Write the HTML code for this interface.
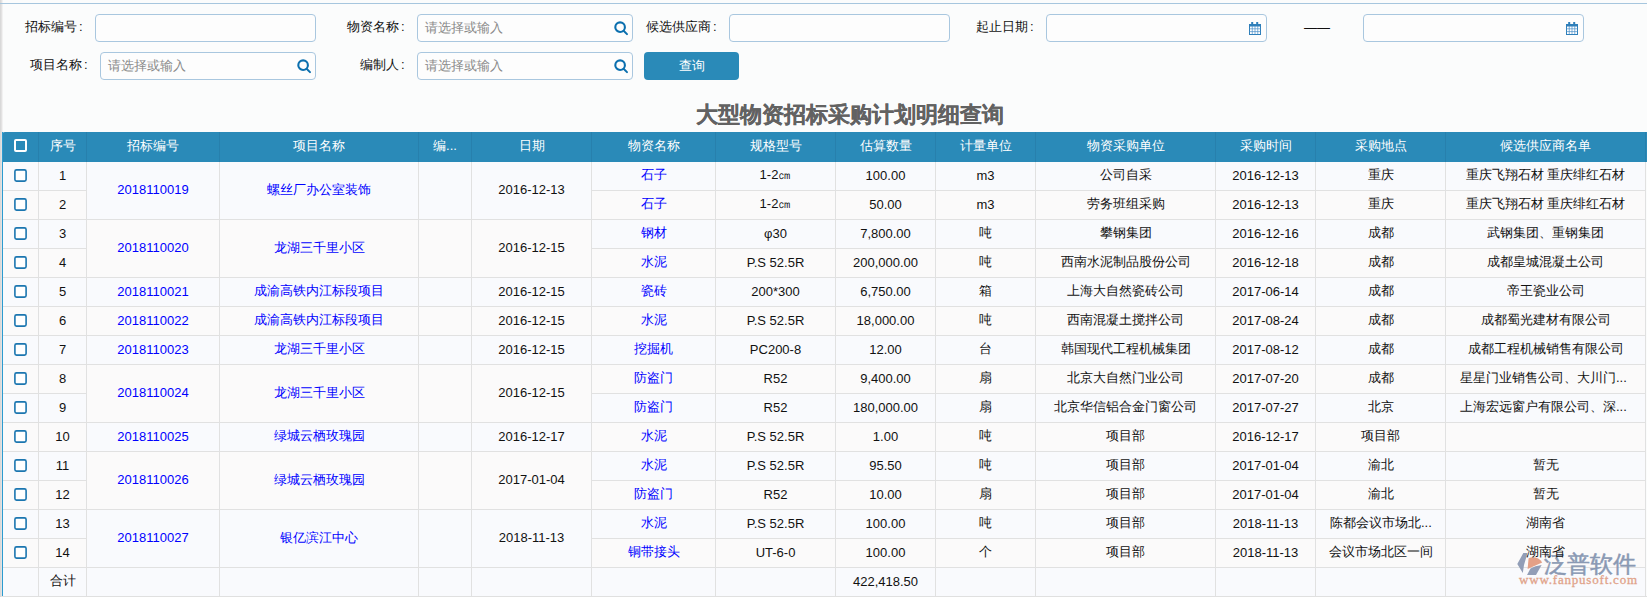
<!DOCTYPE html>
<html><head><meta charset="utf-8"><style>
*{box-sizing:border-box}
html,body{margin:0;padding:0}
body{width:1647px;height:597px;overflow:hidden;position:relative;background:#fbfcfc;font-family:"Liberation Sans",sans-serif;font-size:13px;color:#111}
.pl{position:absolute;left:0;top:0;width:1px;height:597px;background:#d9d9d9}
.pl2{position:absolute;left:1px;top:0;width:1px;height:597px;background:#e3e2e2}
.pl3{position:absolute;left:2px;top:0;width:1px;height:132px;background:#f1f1f1}
.tl{position:absolute;left:0;top:3px;width:1647px;height:1px;background:#a6c6de}
.lb{position:absolute;white-space:nowrap;line-height:16px;color:#111}
.in{position:absolute;height:28px;border:1px solid #a9c7df;border-radius:4px;background:#fdfdfd}
.ph{position:absolute;left:7px;top:5px;line-height:16px;color:#8a8a8a}
.si{position:absolute;left:195px;top:6px}
.ci{position:absolute;right:5px;top:6px}
.co{font-weight:normal;margin-left:2px}
.btn{position:absolute;left:644px;top:52px;width:95px;height:28px;background:#2a8ab8;border-radius:4px;color:#fff;text-align:center;line-height:28px}
.title{position:absolute;left:696px;top:101px;-webkit-text-stroke:0.25px #626262;font-size:22px;font-weight:bold;color:#626262;line-height:28px;white-space:nowrap}
.hd{position:absolute;left:2px;top:132px;width:1645px;height:30px;background:#2a8ab8;border-top-left-radius:3px}
.h{position:absolute;top:132px;height:30px;line-height:28px;text-align:center;color:#fff;border-right:1px solid #2780ad;white-space:nowrap}
.c{position:absolute;border-right:1px solid #e1e1e1;border-bottom:1px solid #e1e1e1;text-align:center;white-space:nowrap;overflow:hidden;display:flex;align-items:center;justify-content:center;padding-bottom:2px}
.c span{display:block}
.c .cb{display:block}
.c{background:#f9fafd}
.c.e{background:#fbfafa}
.c.a{color:#0000ff}
.c.l{justify-content:flex-start;padding-left:14px}
.tbl{position:absolute;left:2px;top:132px;width:1px;height:465px;background:#2b9bd0}
.cb{display:block;margin:1px 0 0 0}
.cbh{display:inline-block;width:13px;height:13px;border:2px solid #fff;border-radius:2px;vertical-align:middle;margin-top:-3px}
.logo{position:absolute;left:1515px;top:550px;width:130px;height:40px;z-index:1;opacity:0.95}
.lt{position:absolute;left:29px;top:0px;font-size:23px;line-height:28px;color:#8494b0;-webkit-text-stroke:0.5px #8494b0;white-space:nowrap}
.lu{position:absolute;left:4px;top:23px;font-family:"Liberation Serif",serif;font-size:13px;line-height:14px;letter-spacing:0.8px;color:#df9e84;-webkit-text-stroke:0.3px #df9e84;white-space:nowrap}
.c span{position:relative;z-index:2}
.bot{position:absolute;left:2px;top:596px;width:1645px;height:1px;background:#e0e0e0}
</style></head><body>
<div class="pl"></div><div class="pl2"></div><div class="pl3"></div><div class="tl"></div>
<div class="lb" style="left:25px;top:19px">招标编号<b class="co">:</b></div>
<div class="in" style="left:95px;top:14px;width:221px"></div>
<div class="lb" style="left:347px;top:19px">物资名称<b class="co">:</b></div>
<div class="in" style="left:417px;top:14px;width:216px"><span class="ph">请选择或输入</span><svg class="si" width="17" height="17" viewBox="0 0 17 17"><circle cx="7.1" cy="6.2" r="4.8" fill="none" stroke="#0b6fae" stroke-width="2.1"/><line x1="10.6" y1="9.7" x2="14" y2="13.1" stroke="#0b6fae" stroke-width="2" stroke-linecap="round"/></svg></div>
<div class="lb" style="left:646px;top:19px">候选供应商<b class="co">:</b></div>
<div class="in" style="left:729px;top:14px;width:221px"></div>
<div class="lb" style="left:976px;top:19px">起止日期<b class="co">:</b></div>
<div class="in" style="left:1046px;top:14px;width:221px"><svg class="ci" width="13" height="14" viewBox="0 0 13 14"><rect x="1.5" y="3.5" width="11" height="10" fill="#fff" stroke="#2f7fba"/><rect x="1" y="3" width="12" height="2.5" fill="#2f7fba"/><path d="M4.25 5v8M7 5v8M9.75 5v8M1.5 7.8h11M1.5 10.6h11" stroke="#4a8fc8" stroke-width="0.7"/><rect x="3.2" y="1" width="2" height="3" fill="#2f7fba"/><rect x="8.2" y="1" width="2" height="3" fill="#2f7fba"/></svg></div>
<div class="lb" style="left:1304px;top:20px">——</div>
<div class="in" style="left:1363px;top:14px;width:221px"><svg class="ci" width="13" height="14" viewBox="0 0 13 14"><rect x="1.5" y="3.5" width="11" height="10" fill="#fff" stroke="#2f7fba"/><rect x="1" y="3" width="12" height="2.5" fill="#2f7fba"/><path d="M4.25 5v8M7 5v8M9.75 5v8M1.5 7.8h11M1.5 10.6h11" stroke="#4a8fc8" stroke-width="0.7"/><rect x="3.2" y="1" width="2" height="3" fill="#2f7fba"/><rect x="8.2" y="1" width="2" height="3" fill="#2f7fba"/></svg></div>
<div class="lb" style="left:30px;top:57px">项目名称<b class="co">:</b></div>
<div class="in" style="left:100px;top:52px;width:216px"><span class="ph">请选择或输入</span><svg class="si" width="17" height="17" viewBox="0 0 17 17"><circle cx="7.1" cy="6.2" r="4.8" fill="none" stroke="#0b6fae" stroke-width="2.1"/><line x1="10.6" y1="9.7" x2="14" y2="13.1" stroke="#0b6fae" stroke-width="2" stroke-linecap="round"/></svg></div>
<div class="lb" style="left:360px;top:57px">编制人<b class="co">:</b></div>
<div class="in" style="left:417px;top:52px;width:216px"><span class="ph">请选择或输入</span><svg class="si" width="17" height="17" viewBox="0 0 17 17"><circle cx="7.1" cy="6.2" r="4.8" fill="none" stroke="#0b6fae" stroke-width="2.1"/><line x1="10.6" y1="9.7" x2="14" y2="13.1" stroke="#0b6fae" stroke-width="2" stroke-linecap="round"/></svg></div>
<div class="btn">查询</div>
<div class="title">大型物资招标采购计划明细查询</div>
<div class="hd"></div>
<div class="h" style="left:3px;width:36px"><i class="cbh"></i></div><div class="h" style="left:39px;width:48px">序号</div><div class="h" style="left:87px;width:133px">招标编号</div><div class="h" style="left:220px;width:199px">项目名称</div><div class="h" style="left:419px;width:53px">编...</div><div class="h" style="left:472px;width:120px">日期</div><div class="h" style="left:592px;width:124px">物资名称</div><div class="h" style="left:716px;width:120px">规格型号</div><div class="h" style="left:836px;width:100px">估算数量</div><div class="h" style="left:936px;width:100px">计量单位</div><div class="h" style="left:1036px;width:180px">物资采购单位</div><div class="h" style="left:1216px;width:100px">采购时间</div><div class="h" style="left:1316px;width:130px">采购地点</div><div class="h" style="left:1446px;width:200px">候选供应商名单</div>
<div class="c k" style="left:3px;top:162px;width:36px;height:29px;"><span><svg class="cb" width="13" height="13" viewBox="0 0 13 13"><rect x="0.9" y="0.9" width="11.2" height="11.2" rx="1.6" fill="#fff" stroke="#1b76b0" stroke-width="1.6"/></svg></span></div><div class="c k" style="left:39px;top:162px;width:48px;height:29px;"><span>1</span></div><div class="c k e" style="left:3px;top:191px;width:36px;height:29px;"><span><svg class="cb" width="13" height="13" viewBox="0 0 13 13"><rect x="0.9" y="0.9" width="11.2" height="11.2" rx="1.6" fill="#fff" stroke="#1b76b0" stroke-width="1.6"/></svg></span></div><div class="c k e" style="left:39px;top:191px;width:48px;height:29px;"><span>2</span></div><div class="c k" style="left:3px;top:220px;width:36px;height:29px;"><span><svg class="cb" width="13" height="13" viewBox="0 0 13 13"><rect x="0.9" y="0.9" width="11.2" height="11.2" rx="1.6" fill="#fff" stroke="#1b76b0" stroke-width="1.6"/></svg></span></div><div class="c k" style="left:39px;top:220px;width:48px;height:29px;"><span>3</span></div><div class="c k e" style="left:3px;top:249px;width:36px;height:29px;"><span><svg class="cb" width="13" height="13" viewBox="0 0 13 13"><rect x="0.9" y="0.9" width="11.2" height="11.2" rx="1.6" fill="#fff" stroke="#1b76b0" stroke-width="1.6"/></svg></span></div><div class="c k e" style="left:39px;top:249px;width:48px;height:29px;"><span>4</span></div><div class="c k" style="left:3px;top:278px;width:36px;height:29px;"><span><svg class="cb" width="13" height="13" viewBox="0 0 13 13"><rect x="0.9" y="0.9" width="11.2" height="11.2" rx="1.6" fill="#fff" stroke="#1b76b0" stroke-width="1.6"/></svg></span></div><div class="c k" style="left:39px;top:278px;width:48px;height:29px;"><span>5</span></div><div class="c k e" style="left:3px;top:307px;width:36px;height:29px;"><span><svg class="cb" width="13" height="13" viewBox="0 0 13 13"><rect x="0.9" y="0.9" width="11.2" height="11.2" rx="1.6" fill="#fff" stroke="#1b76b0" stroke-width="1.6"/></svg></span></div><div class="c k e" style="left:39px;top:307px;width:48px;height:29px;"><span>6</span></div><div class="c k" style="left:3px;top:336px;width:36px;height:29px;"><span><svg class="cb" width="13" height="13" viewBox="0 0 13 13"><rect x="0.9" y="0.9" width="11.2" height="11.2" rx="1.6" fill="#fff" stroke="#1b76b0" stroke-width="1.6"/></svg></span></div><div class="c k" style="left:39px;top:336px;width:48px;height:29px;"><span>7</span></div><div class="c k e" style="left:3px;top:365px;width:36px;height:29px;"><span><svg class="cb" width="13" height="13" viewBox="0 0 13 13"><rect x="0.9" y="0.9" width="11.2" height="11.2" rx="1.6" fill="#fff" stroke="#1b76b0" stroke-width="1.6"/></svg></span></div><div class="c k e" style="left:39px;top:365px;width:48px;height:29px;"><span>8</span></div><div class="c k" style="left:3px;top:394px;width:36px;height:29px;"><span><svg class="cb" width="13" height="13" viewBox="0 0 13 13"><rect x="0.9" y="0.9" width="11.2" height="11.2" rx="1.6" fill="#fff" stroke="#1b76b0" stroke-width="1.6"/></svg></span></div><div class="c k" style="left:39px;top:394px;width:48px;height:29px;"><span>9</span></div><div class="c k e" style="left:3px;top:423px;width:36px;height:29px;"><span><svg class="cb" width="13" height="13" viewBox="0 0 13 13"><rect x="0.9" y="0.9" width="11.2" height="11.2" rx="1.6" fill="#fff" stroke="#1b76b0" stroke-width="1.6"/></svg></span></div><div class="c k e" style="left:39px;top:423px;width:48px;height:29px;"><span>10</span></div><div class="c k" style="left:3px;top:452px;width:36px;height:29px;"><span><svg class="cb" width="13" height="13" viewBox="0 0 13 13"><rect x="0.9" y="0.9" width="11.2" height="11.2" rx="1.6" fill="#fff" stroke="#1b76b0" stroke-width="1.6"/></svg></span></div><div class="c k" style="left:39px;top:452px;width:48px;height:29px;"><span>11</span></div><div class="c k e" style="left:3px;top:481px;width:36px;height:29px;"><span><svg class="cb" width="13" height="13" viewBox="0 0 13 13"><rect x="0.9" y="0.9" width="11.2" height="11.2" rx="1.6" fill="#fff" stroke="#1b76b0" stroke-width="1.6"/></svg></span></div><div class="c k e" style="left:39px;top:481px;width:48px;height:29px;"><span>12</span></div><div class="c k" style="left:3px;top:510px;width:36px;height:29px;"><span><svg class="cb" width="13" height="13" viewBox="0 0 13 13"><rect x="0.9" y="0.9" width="11.2" height="11.2" rx="1.6" fill="#fff" stroke="#1b76b0" stroke-width="1.6"/></svg></span></div><div class="c k" style="left:39px;top:510px;width:48px;height:29px;"><span>13</span></div><div class="c k e" style="left:3px;top:539px;width:36px;height:29px;"><span><svg class="cb" width="13" height="13" viewBox="0 0 13 13"><rect x="0.9" y="0.9" width="11.2" height="11.2" rx="1.6" fill="#fff" stroke="#1b76b0" stroke-width="1.6"/></svg></span></div><div class="c k e" style="left:39px;top:539px;width:48px;height:29px;"><span>14</span></div><div class="c k" style="left:3px;top:568px;width:36px;height:29px;"><span></span></div><div class="c k" style="left:39px;top:568px;width:48px;height:29px;"><span>合计</span></div><div class="c a" style="left:87px;top:162px;width:133px;height:58px;"><span>2018110019</span></div><div class="c a" style="left:220px;top:162px;width:199px;height:58px;"><span>螺丝厂办公室装饰</span></div><div class="c " style="left:419px;top:162px;width:53px;height:58px;"><span></span></div><div class="c " style="left:472px;top:162px;width:120px;height:58px;"><span>2016-12-13</span></div><div class="c a e" style="left:87px;top:220px;width:133px;height:58px;"><span>2018110020</span></div><div class="c a e" style="left:220px;top:220px;width:199px;height:58px;"><span>龙湖三千里小区</span></div><div class="c  e" style="left:419px;top:220px;width:53px;height:58px;"><span></span></div><div class="c  e" style="left:472px;top:220px;width:120px;height:58px;"><span>2016-12-15</span></div><div class="c a" style="left:87px;top:278px;width:133px;height:29px;"><span>2018110021</span></div><div class="c a" style="left:220px;top:278px;width:199px;height:29px;"><span>成渝高铁内江标段项目</span></div><div class="c " style="left:419px;top:278px;width:53px;height:29px;"><span></span></div><div class="c " style="left:472px;top:278px;width:120px;height:29px;"><span>2016-12-15</span></div><div class="c a e" style="left:87px;top:307px;width:133px;height:29px;"><span>2018110022</span></div><div class="c a e" style="left:220px;top:307px;width:199px;height:29px;"><span>成渝高铁内江标段项目</span></div><div class="c  e" style="left:419px;top:307px;width:53px;height:29px;"><span></span></div><div class="c  e" style="left:472px;top:307px;width:120px;height:29px;"><span>2016-12-15</span></div><div class="c a" style="left:87px;top:336px;width:133px;height:29px;"><span>2018110023</span></div><div class="c a" style="left:220px;top:336px;width:199px;height:29px;"><span>龙湖三千里小区</span></div><div class="c " style="left:419px;top:336px;width:53px;height:29px;"><span></span></div><div class="c " style="left:472px;top:336px;width:120px;height:29px;"><span>2016-12-15</span></div><div class="c a e" style="left:87px;top:365px;width:133px;height:58px;"><span>2018110024</span></div><div class="c a e" style="left:220px;top:365px;width:199px;height:58px;"><span>龙湖三千里小区</span></div><div class="c  e" style="left:419px;top:365px;width:53px;height:58px;"><span></span></div><div class="c  e" style="left:472px;top:365px;width:120px;height:58px;"><span>2016-12-15</span></div><div class="c a" style="left:87px;top:423px;width:133px;height:29px;"><span>2018110025</span></div><div class="c a" style="left:220px;top:423px;width:199px;height:29px;"><span>绿城云栖玫瑰园</span></div><div class="c " style="left:419px;top:423px;width:53px;height:29px;"><span></span></div><div class="c " style="left:472px;top:423px;width:120px;height:29px;"><span>2016-12-17</span></div><div class="c a e" style="left:87px;top:452px;width:133px;height:58px;"><span>2018110026</span></div><div class="c a e" style="left:220px;top:452px;width:199px;height:58px;"><span>绿城云栖玫瑰园</span></div><div class="c  e" style="left:419px;top:452px;width:53px;height:58px;"><span></span></div><div class="c  e" style="left:472px;top:452px;width:120px;height:58px;"><span>2017-01-04</span></div><div class="c a" style="left:87px;top:510px;width:133px;height:58px;"><span>2018110027</span></div><div class="c a" style="left:220px;top:510px;width:199px;height:58px;"><span>银亿滨江中心</span></div><div class="c " style="left:419px;top:510px;width:53px;height:58px;"><span></span></div><div class="c " style="left:472px;top:510px;width:120px;height:58px;"><span>2018-11-13</span></div><div class="c a" style="left:592px;top:162px;width:124px;height:29px;"><span>石子</span></div><div class="c " style="left:716px;top:162px;width:120px;height:29px;"><span>1-2㎝</span></div><div class="c " style="left:836px;top:162px;width:100px;height:29px;"><span>100.00</span></div><div class="c " style="left:936px;top:162px;width:100px;height:29px;"><span>m3</span></div><div class="c " style="left:1036px;top:162px;width:180px;height:29px;"><span>公司自采</span></div><div class="c " style="left:1216px;top:162px;width:100px;height:29px;"><span>2016-12-13</span></div><div class="c " style="left:1316px;top:162px;width:130px;height:29px;"><span>重庆</span></div><div class="c " style="left:1446px;top:162px;width:200px;height:29px;"><span>重庆飞翔石材 重庆绯红石材</span></div><div class="c a e" style="left:592px;top:191px;width:124px;height:29px;"><span>石子</span></div><div class="c  e" style="left:716px;top:191px;width:120px;height:29px;"><span>1-2㎝</span></div><div class="c  e" style="left:836px;top:191px;width:100px;height:29px;"><span>50.00</span></div><div class="c  e" style="left:936px;top:191px;width:100px;height:29px;"><span>m3</span></div><div class="c  e" style="left:1036px;top:191px;width:180px;height:29px;"><span>劳务班组采购</span></div><div class="c  e" style="left:1216px;top:191px;width:100px;height:29px;"><span>2016-12-13</span></div><div class="c  e" style="left:1316px;top:191px;width:130px;height:29px;"><span>重庆</span></div><div class="c  e" style="left:1446px;top:191px;width:200px;height:29px;"><span>重庆飞翔石材 重庆绯红石材</span></div><div class="c a" style="left:592px;top:220px;width:124px;height:29px;"><span>钢材</span></div><div class="c " style="left:716px;top:220px;width:120px;height:29px;"><span>φ30</span></div><div class="c " style="left:836px;top:220px;width:100px;height:29px;"><span>7,800.00</span></div><div class="c " style="left:936px;top:220px;width:100px;height:29px;"><span>吨</span></div><div class="c " style="left:1036px;top:220px;width:180px;height:29px;"><span>攀钢集团</span></div><div class="c " style="left:1216px;top:220px;width:100px;height:29px;"><span>2016-12-16</span></div><div class="c " style="left:1316px;top:220px;width:130px;height:29px;"><span>成都</span></div><div class="c " style="left:1446px;top:220px;width:200px;height:29px;"><span>武钢集团、重钢集团</span></div><div class="c a e" style="left:592px;top:249px;width:124px;height:29px;"><span>水泥</span></div><div class="c  e" style="left:716px;top:249px;width:120px;height:29px;"><span>P.S 52.5R</span></div><div class="c  e" style="left:836px;top:249px;width:100px;height:29px;"><span>200,000.00</span></div><div class="c  e" style="left:936px;top:249px;width:100px;height:29px;"><span>吨</span></div><div class="c  e" style="left:1036px;top:249px;width:180px;height:29px;"><span>西南水泥制品股份公司</span></div><div class="c  e" style="left:1216px;top:249px;width:100px;height:29px;"><span>2016-12-18</span></div><div class="c  e" style="left:1316px;top:249px;width:130px;height:29px;"><span>成都</span></div><div class="c  e" style="left:1446px;top:249px;width:200px;height:29px;"><span>成都皇城混凝土公司</span></div><div class="c a" style="left:592px;top:278px;width:124px;height:29px;"><span>瓷砖</span></div><div class="c " style="left:716px;top:278px;width:120px;height:29px;"><span>200*300</span></div><div class="c " style="left:836px;top:278px;width:100px;height:29px;"><span>6,750.00</span></div><div class="c " style="left:936px;top:278px;width:100px;height:29px;"><span>箱</span></div><div class="c " style="left:1036px;top:278px;width:180px;height:29px;"><span>上海大自然瓷砖公司</span></div><div class="c " style="left:1216px;top:278px;width:100px;height:29px;"><span>2017-06-14</span></div><div class="c " style="left:1316px;top:278px;width:130px;height:29px;"><span>成都</span></div><div class="c " style="left:1446px;top:278px;width:200px;height:29px;"><span>帝王瓷业公司</span></div><div class="c a e" style="left:592px;top:307px;width:124px;height:29px;"><span>水泥</span></div><div class="c  e" style="left:716px;top:307px;width:120px;height:29px;"><span>P.S 52.5R</span></div><div class="c  e" style="left:836px;top:307px;width:100px;height:29px;"><span>18,000.00</span></div><div class="c  e" style="left:936px;top:307px;width:100px;height:29px;"><span>吨</span></div><div class="c  e" style="left:1036px;top:307px;width:180px;height:29px;"><span>西南混凝土搅拌公司</span></div><div class="c  e" style="left:1216px;top:307px;width:100px;height:29px;"><span>2017-08-24</span></div><div class="c  e" style="left:1316px;top:307px;width:130px;height:29px;"><span>成都</span></div><div class="c  e" style="left:1446px;top:307px;width:200px;height:29px;"><span>成都蜀光建材有限公司</span></div><div class="c a" style="left:592px;top:336px;width:124px;height:29px;"><span>挖掘机</span></div><div class="c " style="left:716px;top:336px;width:120px;height:29px;"><span>PC200-8</span></div><div class="c " style="left:836px;top:336px;width:100px;height:29px;"><span>12.00</span></div><div class="c " style="left:936px;top:336px;width:100px;height:29px;"><span>台</span></div><div class="c " style="left:1036px;top:336px;width:180px;height:29px;"><span>韩国现代工程机械集团</span></div><div class="c " style="left:1216px;top:336px;width:100px;height:29px;"><span>2017-08-12</span></div><div class="c " style="left:1316px;top:336px;width:130px;height:29px;"><span>成都</span></div><div class="c " style="left:1446px;top:336px;width:200px;height:29px;"><span>成都工程机械销售有限公司</span></div><div class="c a e" style="left:592px;top:365px;width:124px;height:29px;"><span>防盗门</span></div><div class="c  e" style="left:716px;top:365px;width:120px;height:29px;"><span>R52</span></div><div class="c  e" style="left:836px;top:365px;width:100px;height:29px;"><span>9,400.00</span></div><div class="c  e" style="left:936px;top:365px;width:100px;height:29px;"><span>扇</span></div><div class="c  e" style="left:1036px;top:365px;width:180px;height:29px;"><span>北京大自然门业公司</span></div><div class="c  e" style="left:1216px;top:365px;width:100px;height:29px;"><span>2017-07-20</span></div><div class="c  e" style="left:1316px;top:365px;width:130px;height:29px;"><span>成都</span></div><div class="c  e l" style="left:1446px;top:365px;width:200px;height:29px;"><span>星星门业销售公司、大川门...</span></div><div class="c a" style="left:592px;top:394px;width:124px;height:29px;"><span>防盗门</span></div><div class="c " style="left:716px;top:394px;width:120px;height:29px;"><span>R52</span></div><div class="c " style="left:836px;top:394px;width:100px;height:29px;"><span>180,000.00</span></div><div class="c " style="left:936px;top:394px;width:100px;height:29px;"><span>扇</span></div><div class="c " style="left:1036px;top:394px;width:180px;height:29px;"><span>北京华信铝合金门窗公司</span></div><div class="c " style="left:1216px;top:394px;width:100px;height:29px;"><span>2017-07-27</span></div><div class="c " style="left:1316px;top:394px;width:130px;height:29px;"><span>北京</span></div><div class="c  l" style="left:1446px;top:394px;width:200px;height:29px;"><span>上海宏远窗户有限公司、深...</span></div><div class="c a e" style="left:592px;top:423px;width:124px;height:29px;"><span>水泥</span></div><div class="c  e" style="left:716px;top:423px;width:120px;height:29px;"><span>P.S 52.5R</span></div><div class="c  e" style="left:836px;top:423px;width:100px;height:29px;"><span>1.00</span></div><div class="c  e" style="left:936px;top:423px;width:100px;height:29px;"><span>吨</span></div><div class="c  e" style="left:1036px;top:423px;width:180px;height:29px;"><span>项目部</span></div><div class="c  e" style="left:1216px;top:423px;width:100px;height:29px;"><span>2016-12-17</span></div><div class="c  e" style="left:1316px;top:423px;width:130px;height:29px;"><span>项目部</span></div><div class="c  e" style="left:1446px;top:423px;width:200px;height:29px;"><span></span></div><div class="c a" style="left:592px;top:452px;width:124px;height:29px;"><span>水泥</span></div><div class="c " style="left:716px;top:452px;width:120px;height:29px;"><span>P.S 52.5R</span></div><div class="c " style="left:836px;top:452px;width:100px;height:29px;"><span>95.50</span></div><div class="c " style="left:936px;top:452px;width:100px;height:29px;"><span>吨</span></div><div class="c " style="left:1036px;top:452px;width:180px;height:29px;"><span>项目部</span></div><div class="c " style="left:1216px;top:452px;width:100px;height:29px;"><span>2017-01-04</span></div><div class="c " style="left:1316px;top:452px;width:130px;height:29px;"><span>渝北</span></div><div class="c " style="left:1446px;top:452px;width:200px;height:29px;"><span>暂无</span></div><div class="c a e" style="left:592px;top:481px;width:124px;height:29px;"><span>防盗门</span></div><div class="c  e" style="left:716px;top:481px;width:120px;height:29px;"><span>R52</span></div><div class="c  e" style="left:836px;top:481px;width:100px;height:29px;"><span>10.00</span></div><div class="c  e" style="left:936px;top:481px;width:100px;height:29px;"><span>扇</span></div><div class="c  e" style="left:1036px;top:481px;width:180px;height:29px;"><span>项目部</span></div><div class="c  e" style="left:1216px;top:481px;width:100px;height:29px;"><span>2017-01-04</span></div><div class="c  e" style="left:1316px;top:481px;width:130px;height:29px;"><span>渝北</span></div><div class="c  e" style="left:1446px;top:481px;width:200px;height:29px;"><span>暂无</span></div><div class="c a" style="left:592px;top:510px;width:124px;height:29px;"><span>水泥</span></div><div class="c " style="left:716px;top:510px;width:120px;height:29px;"><span>P.S 52.5R</span></div><div class="c " style="left:836px;top:510px;width:100px;height:29px;"><span>100.00</span></div><div class="c " style="left:936px;top:510px;width:100px;height:29px;"><span>吨</span></div><div class="c " style="left:1036px;top:510px;width:180px;height:29px;"><span>项目部</span></div><div class="c " style="left:1216px;top:510px;width:100px;height:29px;"><span>2018-11-13</span></div><div class="c  l" style="left:1316px;top:510px;width:130px;height:29px;"><span>陈都会议市场北...</span></div><div class="c " style="left:1446px;top:510px;width:200px;height:29px;"><span>湖南省</span></div><div class="c a e" style="left:592px;top:539px;width:124px;height:29px;"><span>铜带接头</span></div><div class="c  e" style="left:716px;top:539px;width:120px;height:29px;"><span>UT-6-0</span></div><div class="c  e" style="left:836px;top:539px;width:100px;height:29px;"><span>100.00</span></div><div class="c  e" style="left:936px;top:539px;width:100px;height:29px;"><span>个</span></div><div class="c  e" style="left:1036px;top:539px;width:180px;height:29px;"><span>项目部</span></div><div class="c  e" style="left:1216px;top:539px;width:100px;height:29px;"><span>2018-11-13</span></div><div class="c  e" style="left:1316px;top:539px;width:130px;height:29px;"><span>会议市场北区一间</span></div><div class="c  e" style="left:1446px;top:539px;width:200px;height:29px;"><span>湖南省</span></div><div class="c " style="left:87px;top:568px;width:133px;height:29px;"><span></span></div><div class="c " style="left:220px;top:568px;width:199px;height:29px;"><span></span></div><div class="c " style="left:419px;top:568px;width:53px;height:29px;"><span></span></div><div class="c " style="left:472px;top:568px;width:120px;height:29px;"><span></span></div><div class="c " style="left:592px;top:568px;width:124px;height:29px;"><span></span></div><div class="c " style="left:716px;top:568px;width:120px;height:29px;"><span></span></div><div class="c " style="left:836px;top:568px;width:100px;height:29px;"><span>422,418.50</span></div><div class="c " style="left:936px;top:568px;width:100px;height:29px;"><span></span></div><div class="c " style="left:1036px;top:568px;width:180px;height:29px;"><span></span></div><div class="c " style="left:1216px;top:568px;width:100px;height:29px;"><span></span></div><div class="c " style="left:1316px;top:568px;width:130px;height:29px;"><span></span></div><div class="c " style="left:1446px;top:568px;width:200px;height:29px;"><span></span></div>
<div class="tbl"></div>
<div class="bot"></div>
<div class="logo"><svg width="130" height="40" viewBox="0 0 130 40" style="position:absolute;left:0;top:0">
<polygon points="8.3,3 12.5,3 9,15 7.8,23 2.3,14" fill="#8d9ab4"/>
<path d="M12.6,19 L13.6,8.2 C18,6 24.5,7.5 27.2,12.4 Z" fill="#e39c80"/>
<path d="M12,25 L15.5,18.5 Q20,15.5 26.6,15 L21,25 Z" fill="#8d9ab4"/>
</svg><div class="lt">泛普软件</div><div class="lu">www.fanpusoft.com</div></div>
</body></html>
